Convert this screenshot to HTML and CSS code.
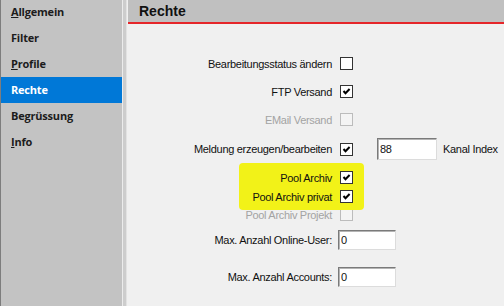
FILE: index.html
```html
<!DOCTYPE html>
<html lang="de">
<head>
    <meta charset="UTF-8">
    <title>Rechte</title>
    <link rel="stylesheet" href="styles.css">
</head>
<body>
    <div class="window">
        <nav class="side">
            <ul class="menu">
                <li><u>A</u>llgemein</li>
                <li>Filter</li>
                <li><u>P</u>rofile</li>
                <li class="active">Rechte</li>
                <li>Begrüssung</li>
                <li><u>I</u>nfo</li>
            </ul>
        </nav>
        <div class="splitter"></div>
        <main class="panel">
            <h1 class="title">Rechte</h1>
            <div class="form">
                <div class="row">
                    <span class="lbl">Bearbeitungsstatus ändern</span>
                    <span class="cb"></span>
                </div>
                <div class="row">
                    <span class="lbl">FTP Versand</span>
                    <span class="cb"><svg viewBox="0 0 11 11"><path d="M2.5 5 L4.5 7.2 L8.6 3" /></svg></span>
                </div>
                <div class="row disabled">
                    <span class="lbl">EMail Versand</span>
                    <span class="cb off"></span>
                </div>
                <div class="row tall">
                    <span class="lbl">Meldung erzeugen/bearbeiten</span>
                    <span class="cb"><svg viewBox="0 0 11 11"><path d="M2.5 5 L4.5 7.2 L8.6 3" /></svg></span>
                    <input class="field" type="text" value="88" readonly>
                    <span class="note">Kanal Index</span>
                </div>
                <!-- gelb markiert -->
                <div class="mark">
                    <div class="row">
                        <span class="lbl">Pool Archiv</span>
                        <span class="cb"><svg viewBox="0 0 11 11"><path d="M2.5 5 L4.5 7.2 L8.6 3" /></svg></span>
                    </div>
                    <div class="row">
                        <span class="lbl">Pool Archiv privat</span>
                        <span class="cb"><svg viewBox="0 0 11 11"><path d="M2.5 5 L4.5 7.2 L8.6 3" /></svg></span>
                    </div>
                </div>
                <div class="row disabled close">
                    <span class="lbl">Pool Archiv Projekt</span>
                    <span class="cb off"></span>
                </div>
                <div class="row input online">
                    <span class="lbl">Max. Anzahl Online-User:</span>
                    <input class="field small" type="text" value="0" readonly>
                </div>
                <div class="row input accounts">
                    <span class="lbl">Max. Anzahl Accounts:</span>
                    <input class="field small" type="text" value="0" readonly>
                </div>
            </div>
        </main>
    </div>
</body>
</html>
```

FILE: styles.css
```css
body {
    margin: 0;
    background-color: #f0f0f0;
    font-family: "Liberation Sans", Arial, sans-serif;
}

.window {
    display: flex;
    height: 306px;
    overflow: hidden;
}

/* linke Navigation */
.side {
    width: 121px;
    background-color: #c3c3c3;
    border-left: 1px solid #7d7d7d;
}

.menu {
    margin: -1px 0 0;
    padding: 0;
    list-style: none;
}

.menu li {
    height: 26px;
    line-height: 26px;
    padding-left: 10px;
    font-family: "Open Sans", "Noto Sans", sans-serif;
    font-size: 11px;
    font-weight: bold;
    letter-spacing: -0.2px;
    color: #1c1c1c;
}

.menu .active {
    background-color: #0078d7;
    color: #fff;
}

.splitter {
    width: 5px;
    box-sizing: border-box;
    background-color: #cdcdcd;
    border-left: 1px solid #ececec;
    border-right: 1px solid #e2e2e2;
}

.panel {
    flex: 1;
    background-color: #f0f0f0;
}

.title {
    margin: 0 0 0 1px;
    height: 22px;
    padding-left: 11px;
    background-color: #c0c0c0;
    border-bottom: 2px solid #e5262a;
    font-size: 14px;
    line-height: 22px;
    font-weight: bold;
    color: #111;
}

/* Formular */
.form {
    padding-top: 33px;
}

.row {
    display: flex;
    align-items: center;
    height: 13px;
    margin-top: 15px;
    font-size: 11px;
    letter-spacing: -0.3px;
    color: #111;
}

.row:first-child {
    margin-top: 0;
}

.lbl {
    width: 205px;
    text-align: right;
    white-space: nowrap;
}

.cb {
    width: 13px;
    height: 13px;
    box-sizing: border-box;
    margin-left: 8px;
    border: 1px solid #333;
    background-color: #fff;
    display: flex;
}

.cb svg {
    width: 11px;
    height: 11px;
    fill: none;
    stroke: #000;
    stroke-width: 2;
}

.cb.off {
    border-color: #bcbcbc;
    background-color: #f4f4f4;
}

.disabled .lbl {
    color: #a3a3a3;
}

.row.tall {
    height: 22px;
    margin-top: 12px;
}

.field {
    width: 60px;
    height: 22px;
    box-sizing: border-box;
    margin: 0 0 0 24px;
    padding: 0 2px;
    border: 1px solid;
    border-color: #7a7a7a #dcdcdc #dcdcdc #7a7a7a;
    box-shadow: inset 1px 1px 0 #b4b4b4;
    background-color: #fff;
    font-family: "Liberation Sans", Arial, sans-serif;
    font-size: 11px;
    letter-spacing: -0.3px;
    color: #111;
    outline: none;
}

.note {
    margin-left: 6px;
}

.mark {
    position: relative;
    z-index: 0;
    margin-top: 3px;
    padding: 8px 0 5px;
}

.mark::before {
    content: "";
    position: absolute;
    left: 112px;
    top: 0;
    bottom: -2px;
    width: 125px;
    border-radius: 4px;
    background-color: #f2f218;
    z-index: -1;
}

.mark .row + .row {
    margin-top: 6px;
}

.row.close {
    margin-top: 0;
}

.row.input {
    height: 20px;
}

.row.online {
    margin-top: 9px;
}

.row.accounts {
    margin-top: 17px;
}

.field.small {
    width: 58px;
    height: 20px;
    margin-left: 6px;
}
```
